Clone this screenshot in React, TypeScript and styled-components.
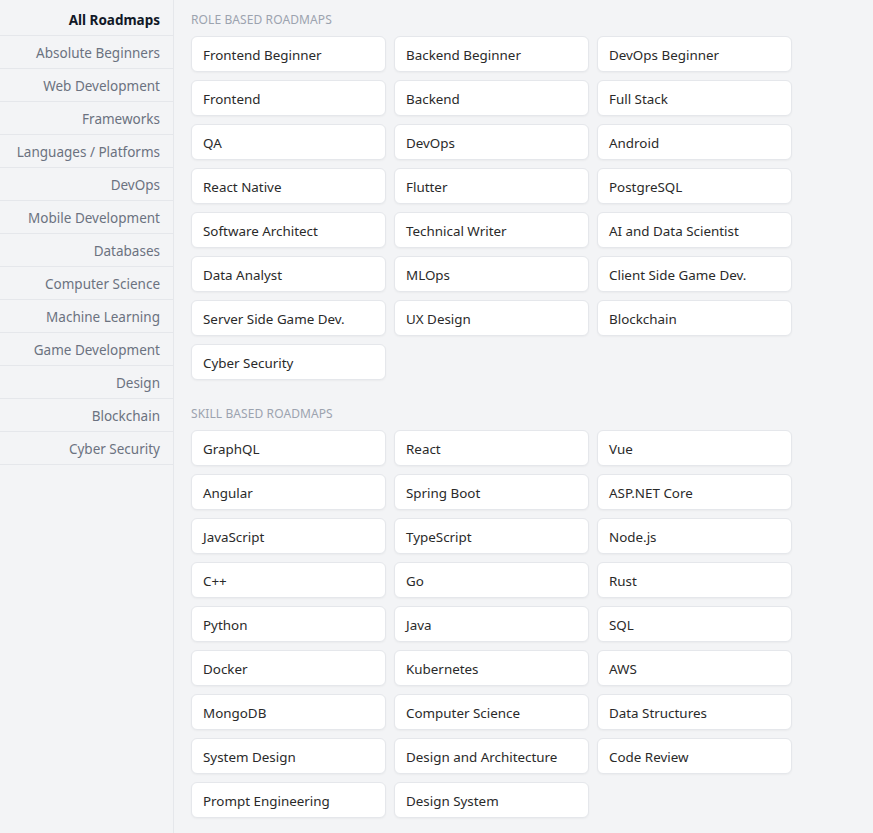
import React from "react";
import styled, { createGlobalStyle } from "styled-components";

const GlobalStyle = createGlobalStyle`
  html, body { margin: 0; padding: 0; background: #f3f4f6; }
  body { font-family: "Noto Sans", "Noto Sans CJK KR", sans-serif; color: #1f2937; }
  * { box-sizing: border-box; }
`;

const Page = styled.div`
  display: flex;
  min-height: 100vh;
  background: #f3f4f6;
`;

const Sidebar = styled.nav`
  width: 174px;
  flex-shrink: 0;
  border-right: 1px solid #e5e7eb;
  padding-top: 3px;
  display: flex;
  flex-direction: column;
`;

const SideItem = styled.a<{ $active?: boolean }>`
  display: flex;
  align-items: center;
  justify-content: flex-end;
  height: 33px;
  padding: 2px 13px 0 8px;
  border-bottom: 1px solid #e5e7eb;
  font-size: 13.5px;
  color: ${(p) => (p.$active ? "#111827" : "#6b7280")};
  font-weight: ${(p) => (p.$active ? 700 : 400)};
  text-decoration: none;
  white-space: nowrap;
`;

const Main = styled.main`
  flex: 1;
  padding: 11px 0 0 17px;
`;

const Section = styled.section`
  width: 601px;
  & + & { margin-top: 25px; }
`;

const Heading = styled.h2`
  margin: 0 0 8px;
  font-size: 12px;
  line-height: 17px;
  font-weight: 400;
  color: #9ca3af;
  text-transform: uppercase;
  letter-spacing: 0.1px;
`;

const Grid = styled.div`
  display: grid;
  grid-template-columns: repeat(3, 1fr);
  gap: 8px;
`;

const Card = styled.a`
  display: flex;
  align-items: center;
  height: 36px;
  padding: 2px 12px 0 11px;
  background: #ffffff;
  border: 1px solid #e5e7eb;
  border-radius: 6px;
  box-shadow: 0 1px 2px rgba(0, 0, 0, 0.04);
  font-size: 13.4px;
  color: #2a2a2a;
  text-decoration: none;
  white-space: nowrap;
`;

const sideItems = [
  "All Roadmaps",
  "Absolute Beginners",
  "Web Development",
  "Frameworks",
  "Languages / Platforms",
  "DevOps",
  "Mobile Development",
  "Databases",
  "Computer Science",
  "Machine Learning",
  "Game Development",
  "Design",
  "Blockchain",
  "Cyber Security",
];

const roleBased = [
  "Frontend Beginner", "Backend Beginner", "DevOps Beginner",
  "Frontend", "Backend", "Full Stack",
  "QA", "DevOps", "Android",
  "React Native", "Flutter", "PostgreSQL",
  "Software Architect", "Technical Writer", "AI and Data Scientist",
  "Data Analyst", "MLOps", "Client Side Game Dev.",
  "Server Side Game Dev.", "UX Design", "Blockchain",
  "Cyber Security",
];

const skillBased = [
  "GraphQL", "React", "Vue",
  "Angular", "Spring Boot", "ASP.NET Core",
  "JavaScript", "TypeScript", "Node.js",
  "C++", "Go", "Rust",
  "Python", "Java", "SQL",
  "Docker", "Kubernetes", "AWS",
  "MongoDB", "Computer Science", "Data Structures",
  "System Design", "Design and Architecture", "Code Review",
  "Prompt Engineering", "Design System",
];

export default function App() {
  return (
    <>
      <GlobalStyle />
      <Page>
        <Sidebar>
          {sideItems.map((s, i) => (
            <SideItem key={s} href="#" $active={i === 0}>
              {s}
            </SideItem>
          ))}
        </Sidebar>
        <Main>
          <Section>
            <Heading>Role Based Roadmaps</Heading>
            <Grid>
              {roleBased.map((r) => (
                <Card key={r} href="#">{r}</Card>
              ))}
            </Grid>
          </Section>
          <Section>
            <Heading>Skill Based Roadmaps</Heading>
            <Grid>
              {skillBased.map((r) => (
                <Card key={r} href="#">{r}</Card>
              ))}
            </Grid>
          </Section>
        </Main>
      </Page>
    </>
  );
}
